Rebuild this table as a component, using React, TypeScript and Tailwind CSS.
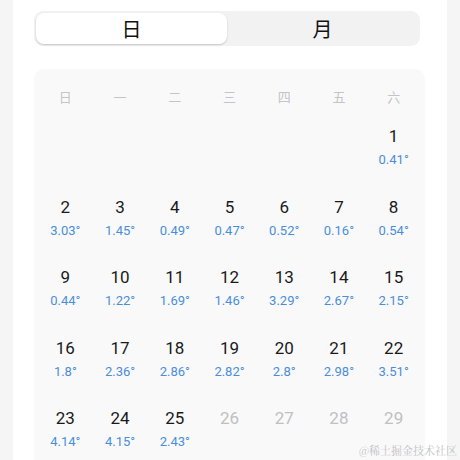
import React from "react";

const temps: Record<number, string> = {
  1: "0.41°", 2: "3.03°", 3: "1.45°", 4: "0.49°", 5: "0.47°", 6: "0.52°", 7: "0.16°", 8: "0.54°",
  9: "0.44°", 10: "1.22°", 11: "1.69°", 12: "1.46°", 13: "3.29°", 14: "2.67°", 15: "2.15°",
  16: "1.8°", 17: "2.36°", 18: "2.86°", 19: "2.82°", 20: "2.8°", 21: "2.98°", 22: "3.51°",
  23: "4.14°", 24: "4.15°", 25: "2.43°",
};

const week = ["日", "一", "二", "三", "四", "五", "六"];

export default function App() {
  const cells: (number | null)[] = [null, null, null, null, null, null];
  for (let d = 1; d <= 29; d++) cells.push(d);
  const cjk = { fontFamily: '"Noto Sans CJK SC", "Noto Sans", sans-serif' };
  const num = { fontFamily: 'Roboto, "Noto Sans", sans-serif' };
  return (
    <div className="relative w-[460px] h-[460px] overflow-hidden bg-[#f5f5f5]">
      <div className="ml-[13px] w-[434px] h-[460px] bg-white pt-[11px] pl-[21px]">
        <div className="w-[386px] h-[35px] rounded-[9px] bg-[#f2f2f2] p-[2px] flex">
          <div
            className="w-[191px] h-[31px] rounded-[8px] bg-white shadow-[0_1px_2px_rgba(0,0,0,0.18)] flex items-center justify-center text-[20px] text-[#111]"
            style={cjk}
          >
            日
          </div>
          <div className="flex-1 flex items-center justify-center text-[20px] text-[#111]" style={cjk}>
            月
          </div>
        </div>
        <div className="mt-[23px] w-[391px] h-[400px] rounded-[10px] bg-[#f9f9fa] px-[4px] pt-[18px]">
          <div className="grid grid-cols-7 h-[20px]">
            {week.map((w) => (
              <div key={w} className="flex items-center justify-center text-[13px] leading-[20px] text-[#c4c4c8]" style={cjk}>
                {w}
              </div>
            ))}
          </div>
          <div className="grid grid-cols-7">
            {cells.map((d, i) => (
              <div key={i} className="h-[70.5px] flex flex-col items-center pt-[17px]" style={num}>
                {d !== null && (
                  <>
                    <div className={`text-[17px] leading-[24px] ${d > 25 ? "text-[#c0c0c0]" : "text-[#1a1a1a]"}`}>{d}</div>
                    {temps[d] && (
                      <div className="mt-[3px] text-[13px] leading-[18px] text-[#4a8edb]">{temps[d]}</div>
                    )}
                  </>
                )}
              </div>
            ))}
          </div>
        </div>
      </div>
      <div
        className="absolute right-[3px] bottom-[2px] text-[11px] leading-[16px] text-[#c2c2c2]"
        style={{ fontFamily: '"Noto Serif CJK SC", "Noto Sans CJK SC", serif' }}
      >
        @稀土掘金技术社区
      </div>
    </div>
  );
}
